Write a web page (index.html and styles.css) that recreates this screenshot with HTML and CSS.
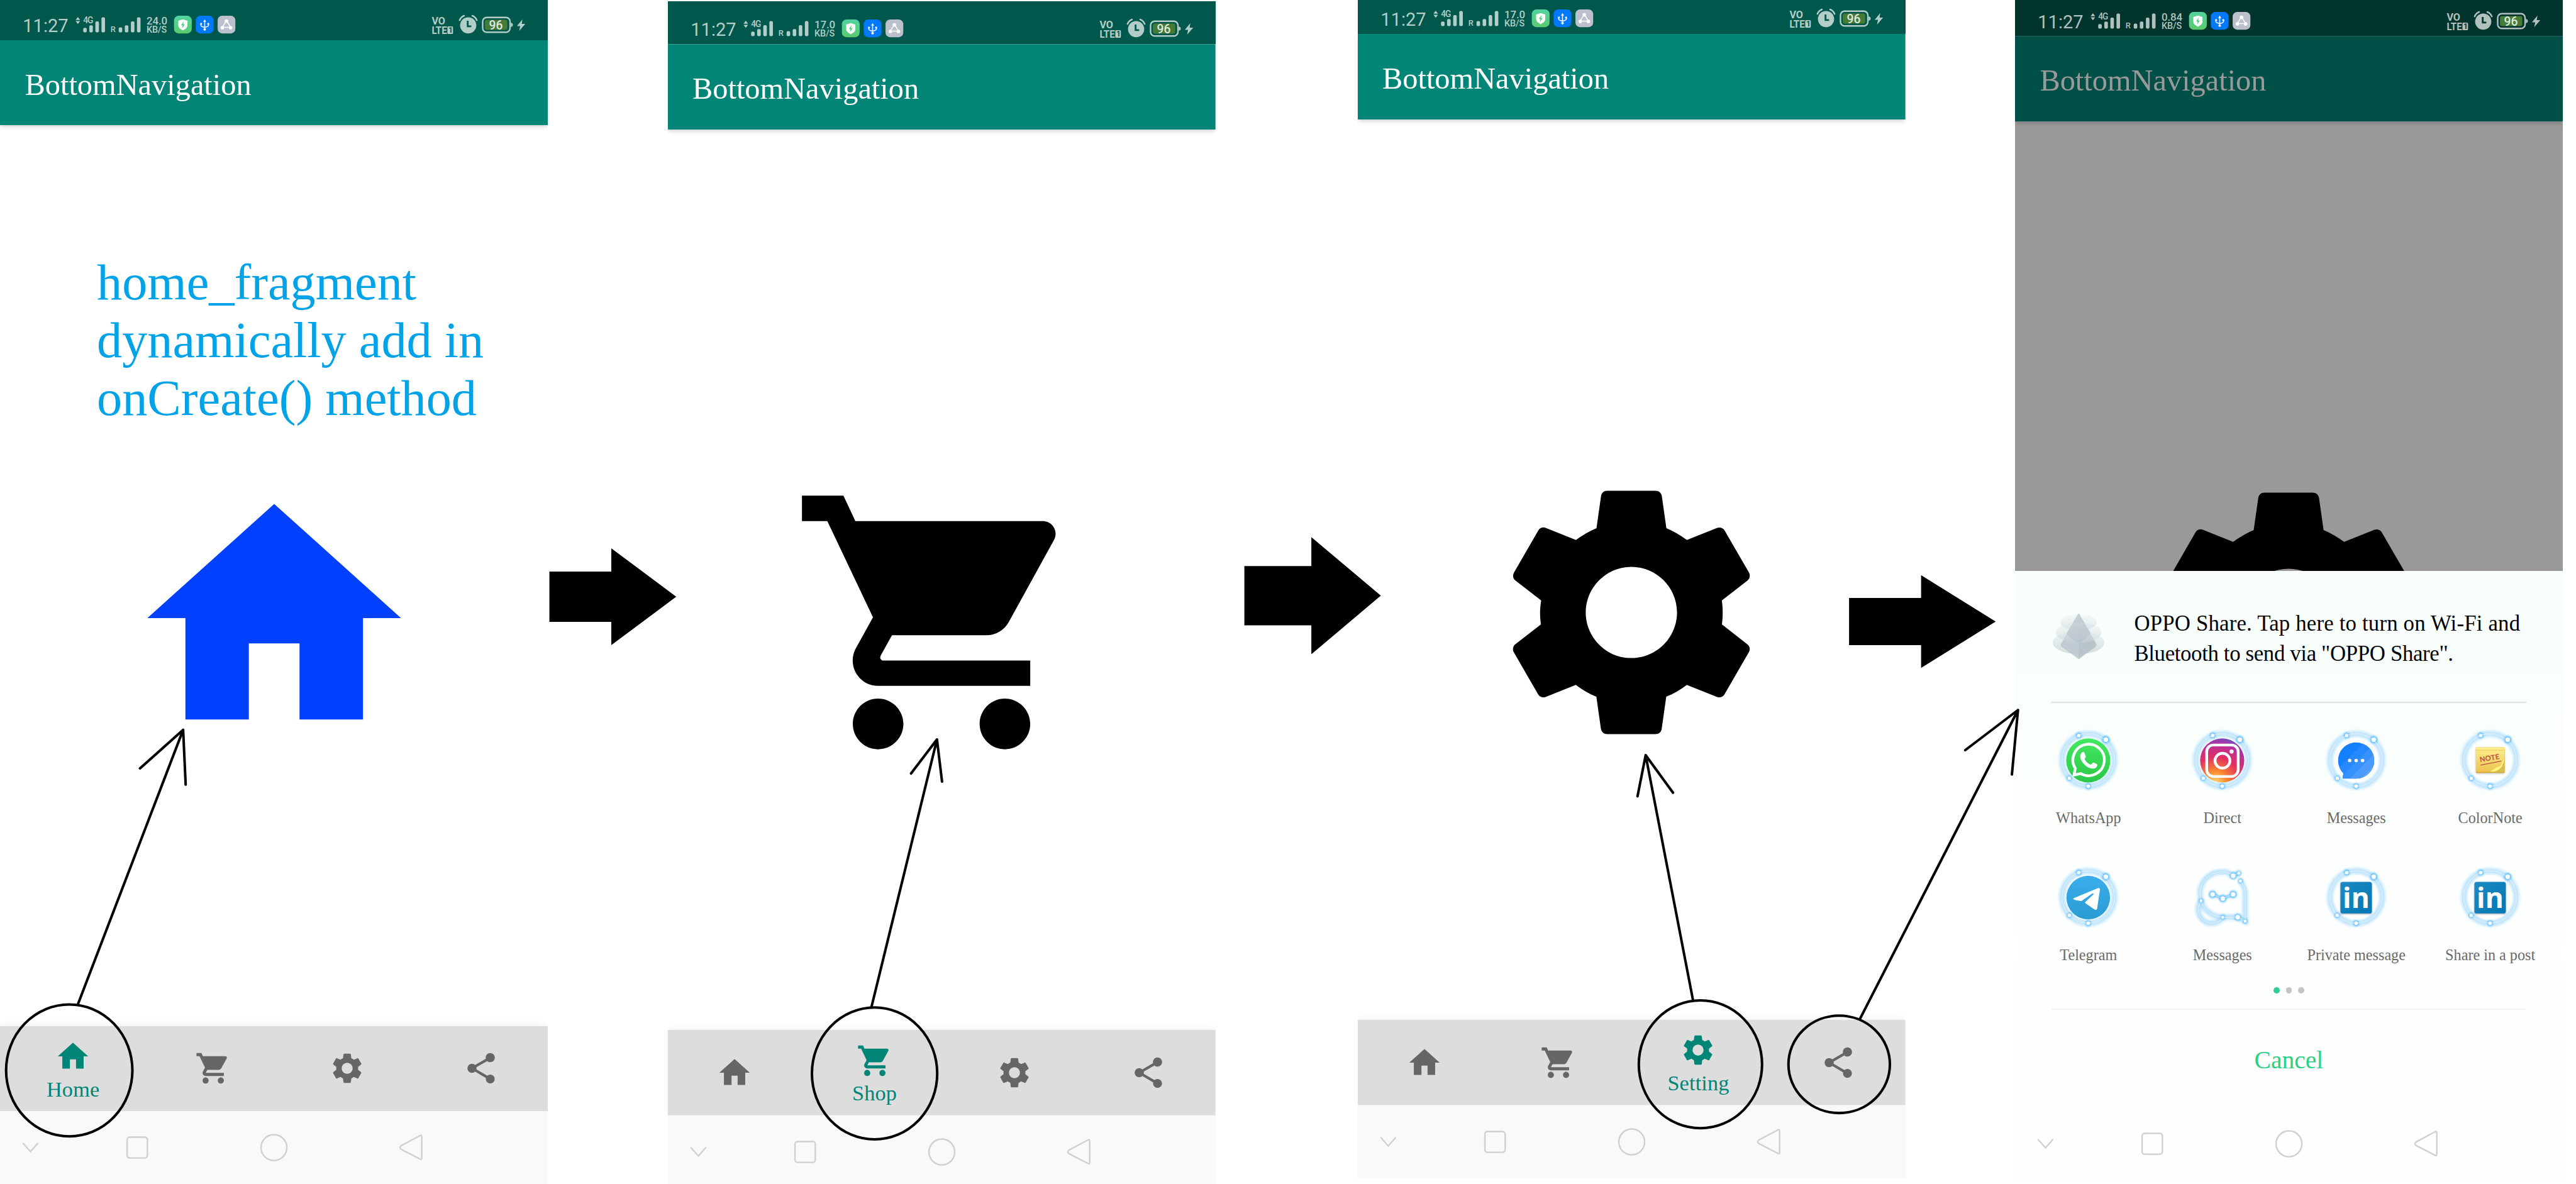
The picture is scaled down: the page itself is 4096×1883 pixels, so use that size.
FILE: index.html
```html
<!DOCTYPE html>
<html lang="en">
<head>
<meta charset="utf-8">
<title>BottomNavigation</title>
<link rel="stylesheet" href="styles.css">
</head>
<body>
<svg class="defs" width="0" height="0" aria-hidden="true">
  <defs>
    <filter id="soft" x="-30%" y="-30%" width="160%" height="160%"><feGaussianBlur stdDeviation="2.4"/></filter>
    <filter id="glow" x="-100%" y="-100%" width="300%" height="300%"><feGaussianBlur stdDeviation="2"/></filter>
    <linearGradient id="shield" x1="0" y1="0" x2="0" y2="1"><stop offset="0" stop-color="#52d3a0"/><stop offset="1" stop-color="#5acb6c"/></linearGradient>
    <linearGradient id="wa" x1="0" y1="0" x2="0" y2="1"><stop offset="0" stop-color="#43e960"/><stop offset="1" stop-color="#2ac848"/></linearGradient>
    <radialGradient id="ig" cx=".35" cy="1" r="1.05"><stop offset="0" stop-color="#fed576"/><stop offset=".26" stop-color="#f9852f"/><stop offset=".55" stop-color="#e22f63"/><stop offset=".82" stop-color="#b9309c"/><stop offset="1" stop-color="#6a4fc6"/></radialGradient>
    <linearGradient id="tg" x1="0" y1="0" x2="0" y2="1"><stop offset="0" stop-color="#3aaeec"/><stop offset="1" stop-color="#2a9ad2"/></linearGradient>
    <linearGradient id="li" x1="0" y1="0" x2="1" y2="1"><stop offset="0" stop-color="#1f8ac2"/><stop offset="1" stop-color="#0077b5"/></linearGradient>
    <linearGradient id="note" x1="0" y1="0" x2="0" y2="1"><stop offset="0" stop-color="#fbf08c"/><stop offset="1" stop-color="#edc352"/></linearGradient>
    <linearGradient id="opal" x1="0" y1="0" x2="0" y2="1"><stop offset="0" stop-color="#eef3f5"/><stop offset="1" stop-color="#c9d2d8"/></linearGradient>
    <clipPath id="bubble"><path d="M0-35.6A35.6 35.6 0 0 1 0 35.6H-25Q-27 35.6-26.6 33L-25 25.4A35.6 35.6 0 0 1 0-35.6Z"/></clipPath>

    <symbol id="home" viewBox="0 0 24 24"><path d="M10 20v-6h4v6h5v-8h3L12 3 2 12h3v8z"/></symbol>
    <symbol id="cart" viewBox="0 0 24 24"><path d="M7 18c-1.1 0-1.99.9-1.99 2S5.9 22 7 22s2-.9 2-2-.9-2-2-2zM1 2v2h2l3.6 7.59-1.35 2.45c-.16.28-.25.61-.25.96 0 1.1.9 2 2 2h12v-2H7.42c-.14 0-.25-.11-.25-.25l.03-.12.9-1.63h7.45c.75 0 1.41-.41 1.75-1.03l3.58-6.49c.08-.14.12-.31.12-.48 0-.55-.45-1-1-1H5.21l-.94-2H1zm16 16c-1.1 0-1.99.9-1.99 2s.89 2 1.99 2 2-.9 2-2-.9-2-2-2z"/></symbol>
    <symbol id="gear" viewBox="0 0 24 24"><path d="M19.14 12.94c.04-.3.06-.61.06-.94 0-.32-.02-.64-.07-.94l2.03-1.58c.18-.14.23-.41.12-.61l-1.92-3.32c-.12-.22-.37-.29-.59-.22l-2.39.96c-.5-.38-1.03-.7-1.62-.94L14.4 2.81c-.04-.24-.24-.41-.48-.41h-3.84c-.24 0-.43.17-.47.41L9.25 5.35C8.66 5.59 8.12 5.92 7.63 6.29L5.24 5.33c-.22-.08-.47 0-.59.22L2.74 8.87c-.12.21-.08.47.12.61l2.03 1.58C4.84 11.36 4.8 11.69 4.8 12s.02.64.07.94l-2.03 1.58c-.18.14-.23.41-.12.61l1.92 3.32c.12.22.37.29.59.22l2.39-.96c.5.38 1.03.7 1.62.94l.36 2.54c.05.24.24.41.48.41h3.84c.24 0 .44-.17.47-.41l.36-2.54c.59-.24 1.13-.56 1.62-.94l2.39.96c.22.08.47 0 .59-.22l1.92-3.32c.12-.22.07-.47-.12-.61L19.14 12.94zM12 15.6c-1.98 0-3.6-1.62-3.6-3.6s1.62-3.6 3.6-3.6 3.6 1.62 3.6 3.6-1.62 3.6-3.6 3.6z"/></symbol>
    <symbol id="share" viewBox="0 0 24 24"><path d="M18 16.08c-.76 0-1.44.3-1.96.77L8.91 12.7c.05-.23.09-.46.09-.7s-.04-.47-.09-.7l7.05-4.11c.54.5 1.25.81 2.04.81 1.66 0 3-1.34 3-3s-1.34-3-3-3-3 1.34-3 3c0 .24.04.47.09.7L8.04 9.81C7.5 9.31 6.79 9 6 9c-1.66 0-3 1.34-3 3s1.34 3 3 3c.79 0 1.5-.31 2.04-.81l7.12 4.16c-.05.21-.08.43-.08.65 0 1.61 1.31 2.92 2.92 2.92s2.92-1.31 2.92-2.92-1.31-2.92-2.92-2.92z"/></symbol>

    <symbol id="sys" viewBox="0 0 1080 144">
      <g fill="none" stroke="#d0d0d0" stroke-width="3">
        <path d="M45 63l15 17 15-17"/>
        <rect x="250.500" y="51.500" width="40" height="41" rx="5"/>
        <circle cx="540" cy="72" r="25.500"/>
        <path d="M827 49Q831.500 45.500 831.500 51V92Q831.500 97.500 827 94L791 75.500Q786 72 791 68Z" stroke-linejoin="round"/>
      </g>
    </symbol>

    <!-- status bar graphics; the text goes on top of them in each phone -->
    <symbol id="status" viewBox="0 0 1080 79">
      <g fill="currentColor">
        <g class="traffic"><path d="M149 39.500l4.500-6 4.500 6z"/><path d="M149 41.500l4.500 6 4.500-6z"/></g>
        <rect x="164" y="55" width="7" height="9" rx="2.500"/><rect x="176" y="50" width="7" height="14" rx="2.500"/><rect x="188" y="42" width="7" height="22" rx="2.500"/><rect x="200" y="34" width="7" height="30" rx="2.500"/>
        <rect x="234" y="54" width="7" height="10" rx="2.500"/><rect x="246" y="50" width="7" height="14" rx="2.500"/><rect x="258" y="42" width="7" height="22" rx="2.500"/><rect x="270" y="34" width="7" height="30" rx="2.500"/>
        <rect x="882" y="52" width="11" height="15" rx="2"/>
        <circle cx="923" cy="50" r="16"/>
        <path d="M906 40q3-7 9-9M940 40q-3-7-9-9" fill="none" stroke="currentColor" stroke-width="3" stroke-linecap="round"/>
        <path d="M1007 45q4 0 4 4t-4 4z"/>
        <path d="M1030 38l-11 13.500h6.500L1023.500 61l12-14h-7z"/>
      </g>
      <path class="cut" d="M922 41v11h7" fill="none" stroke-width="3.500"/>
      <rect x="951.500" y="34.500" width="54" height="29" rx="8" fill="none" stroke="currentColor" stroke-width="3"/>
      <rect x="956" y="39" width="44" height="20" rx="4" fill="#467a37"/>
      <rect x="343" y="31" width="35" height="35" rx="9" fill="url(#shield)"/>
      <path d="M360.500 38l9 3v9q0 6-9 10-9-4-9-10v-9z" fill="#fff"/><path d="M362 42l-5 8h3l-1 6 5-8h-3z" fill="#45cf78"/>
      <rect x="386" y="31" width="35" height="35" rx="9" fill="#0079ff"/>
      <g fill="#fff" stroke="#fff"><path d="M403.500 41v16M396 47v3q0 2.500 7.500 4 7.500-1.500 7.500-4v-3" fill="none" stroke-width="2"/><path stroke="none" d="M400.500 43l3-5 3 5z"/><circle stroke="none" cx="403.500" cy="58" r="2.500"/><circle stroke="none" cx="396.500" cy="47" r="2"/><circle stroke="none" cx="410.500" cy="47" r="2"/></g>
      <rect x="429" y="31" width="35" height="35" rx="9" fill="#bbc0cc"/>
      <g fill="#fff" stroke="#fff" stroke-width="1.800"><path d="M445 43l-6 10M448 43l6 10M442 54h9" fill="none"/><circle cx="446.500" cy="41.500" r="2.600"/><circle cx="438.500" cy="54.500" r="2.600"/><circle cx="454.500" cy="54.500" r="2.600"/></g>
    </symbol>

    <symbol id="halo" viewBox="-65 -65 130 130">
      <circle cy="-1" r="51.700" fill="none" stroke="#bfe4fd" stroke-width="11.500" filter="url(#soft)"/>
      <g fill="#62bfff" filter="url(#glow)"><circle cx="-18.700" cy="-49.300" r="6"/><circle cx="34.700" cy="-41" r="7.500"/><circle cx="-37.300" cy="35" r="5.500"/><circle cy="50.700" r="6"/></g>
      <circle cy="-1" r="51.700" fill="none" stroke="#fff" stroke-opacity=".75"/>
      <g fill="#fff"><circle cx="-18.700" cy="-49.300" r="3.400"/><circle cx="34.700" cy="-41" r="4.500"/><circle cx="-37.300" cy="35" r="3.300"/><circle cy="50.700" r="3.500"/></g>
    </symbol>
  </defs>
</svg>

<main class="board">
  <section class="phone phone-home">
    <div class="status">
      <svg viewBox="0 0 1080 79"><use href="#status"/><g class="st"><text class="clock" x="45" y="63" font-size="36">11:27</text><text x="164" y="46" font-size="17" textLength="20">4G</text><text x="218" y="63.500" font-size="16">R</text><text x="289" y="48" font-size="21" textLength="41">24.0</text><text x="289" y="64" font-size="18" textLength="40">KB/S</text><text x="851" y="48" font-size="20" font-weight="700">VO</text><text x="851" y="67" font-size="20" font-weight="700" textLength="30" lengthAdjust="spacingAndGlyphs">LTE</text><text class="sim" x="884" y="65" font-size="15" font-weight="700" textLength="7">1</text><text class="pct" x="964" y="58" font-size="24">96</text></g></svg>
    </div>
    <header class="appbar">BottomNavigation</header>
    <div class="content"><svg class="hero hero-home"><use href="#home"/></svg></div>
    <nav class="tabs">
      <a class="tab active"><svg><use href="#home"/></svg><span>Home</span></a>
      <a class="tab"><svg><use href="#cart"/></svg></a>
      <a class="tab"><svg><use href="#gear"/></svg></a>
      <a class="tab"><svg><use href="#share"/></svg></a>
    </nav>
    <div class="sysbar"><svg><use href="#sys"/></svg></div>
    <p class="remark">home_fragment<br>dynamically add in<br>onCreate() method</p>
  </section>

  <section class="phone phone-shop">
    <div class="status">
      <svg viewBox="0 0 1080 79"><use href="#status"/><g class="st"><text class="clock" x="45" y="63" font-size="36">11:27</text><text x="164" y="46" font-size="17" textLength="20">4G</text><text x="218" y="63.500" font-size="16">R</text><text x="289" y="48" font-size="21" textLength="41">17.0</text><text x="289" y="64" font-size="18" textLength="40">KB/S</text><text x="851" y="48" font-size="20" font-weight="700">VO</text><text x="851" y="67" font-size="20" font-weight="700" textLength="30" lengthAdjust="spacingAndGlyphs">LTE</text><text class="sim" x="884" y="65" font-size="15" font-weight="700" textLength="7">1</text><text class="pct" x="964" y="58" font-size="24">96</text></g></svg>
    </div>
    <header class="appbar">BottomNavigation</header>
    <div class="content"><svg class="hero"><use href="#cart"/></svg></div>
    <nav class="tabs">
      <a class="tab"><svg><use href="#home"/></svg></a>
      <a class="tab active"><svg><use href="#cart"/></svg><span>Shop</span></a>
      <a class="tab"><svg><use href="#gear"/></svg></a>
      <a class="tab"><svg><use href="#share"/></svg></a>
    </nav>
    <div class="sysbar"><svg><use href="#sys"/></svg></div>
  </section>

  <section class="phone phone-setting">
    <div class="status">
      <svg viewBox="0 0 1080 79"><use href="#status"/><g class="st"><text class="clock" x="45" y="63" font-size="36">11:27</text><text x="164" y="46" font-size="17" textLength="20">4G</text><text x="218" y="63.500" font-size="16">R</text><text x="289" y="48" font-size="21" textLength="41">17.0</text><text x="289" y="64" font-size="18" textLength="40">KB/S</text><text x="851" y="48" font-size="20" font-weight="700">VO</text><text x="851" y="67" font-size="20" font-weight="700" textLength="30" lengthAdjust="spacingAndGlyphs">LTE</text><text class="sim" x="884" y="65" font-size="15" font-weight="700" textLength="7">1</text><text class="pct" x="964" y="58" font-size="24">96</text></g></svg>
    </div>
    <header class="appbar">BottomNavigation</header>
    <div class="content"><svg class="hero"><use href="#gear"/></svg></div>
    <nav class="tabs">
      <a class="tab"><svg><use href="#home"/></svg></a>
      <a class="tab"><svg><use href="#cart"/></svg></a>
      <a class="tab active"><svg><use href="#gear"/></svg><span>Setting</span></a>
      <a class="tab"><svg><use href="#share"/></svg></a>
    </nav>
    <div class="sysbar"><svg><use href="#sys"/></svg></div>
  </section>

  <section class="phone phone-share">
    <div class="status">
      <svg viewBox="0 0 1080 79"><use href="#status"/><g class="st"><text class="clock" x="45" y="63" font-size="36">11:27</text><text x="164" y="46" font-size="17" textLength="20">4G</text><text x="218" y="63.500" font-size="16">R</text><text x="289" y="48" font-size="21" textLength="41">0.84</text><text x="289" y="64" font-size="18" textLength="40">KB/S</text><text x="851" y="48" font-size="20" font-weight="700">VO</text><text x="851" y="67" font-size="20" font-weight="700" textLength="30" lengthAdjust="spacingAndGlyphs">LTE</text><text class="sim" x="884" y="65" font-size="15" font-weight="700" textLength="7">1</text><text class="pct" x="964" y="58" font-size="24">96</text></g></svg>
    </div>
    <header class="appbar">BottomNavigation</header>
    <div class="content"><svg class="hero"><use href="#gear"/></svg></div>
    <div class="sheet">
      <div class="oppo">
        <svg class="oppo-icon" viewBox="0 0 102 90">
          <ellipse cx="51" cy="57" rx="51" ry="23" fill="url(#opal)" opacity=".75"/>
          <path d="M51 0q2 0 4 5L86 60q1 3-2 6Q63 80 51 90 39 80 18 66q-3-3-2-6L47 5q2-5 4-5z" fill="#bcc6ce" opacity=".85"/>
          <path d="M51 0q2 0 4 5L86 60q1 3-2 6Q63 80 51 90z" fill="#a9b5be" opacity=".3"/>
          <ellipse cx="51" cy="37" rx="45" ry="20" fill="url(#opal)" opacity=".55"/>
          <ellipse cx="51" cy="17" rx="36" ry="16" fill="url(#opal)" opacity=".5"/>
          <path d="M51 0L75 38q-12 16-24 19-12-3-24-19z" fill="#aeb9c2" opacity=".4"/>
        </svg>
        <p><span class="line-a">OPPO Share. Tap here to turn on Wi-Fi and</span><br><span class="line-b">Bluetooth to send via "OPPO Share".</span></p>
      </div>
      <div class="rule"></div>
      <div class="apps">
        <div class="app"><svg viewBox="-65 -65 130 130"><use href="#halo" x="-65" y="-65" width="130" height="130"/>
          <circle r="43.500" fill="url(#wa)"/>
          <path d="M-25.500 15.500A31 31 0 1 1-14.500 26L-28 28.500Z" fill="none" stroke="#fff" stroke-width="5.400" stroke-linejoin="miter"/>
          <path d="M-14-14C-17-9-16-3-11 4-5 12 3 16 9 16c5 0 9-3 9-8q0-1-8-4C8 4 7 8 5 8 0 7-6 1-7-3c0-2 3-3 2-6L-8-16c-2-2-5 0-6 2z" fill="#fff"/></svg><span>WhatsApp</span></div>
        <div class="app"><svg viewBox="-65 -65 130 130"><use href="#halo" x="-65" y="-65" width="130" height="130"/>
          <circle r="43.500" fill="url(#ig)"/>
          <g fill="none" stroke="#fff" stroke-width="5.400"><rect x="-30.500" y="-30.500" width="62" height="62" rx="13"/><circle cx=".5" cy=".5" r="14.700"/></g><circle cx="18.500" cy="-17.500" r="4" fill="#fff"/></svg><span>Direct</span></div>
        <div class="app"><svg viewBox="-65 -65 130 130"><use href="#halo" x="-65" y="-65" width="130" height="130"/>
          <circle r="43.500" fill="#fff"/>
          <g clip-path="url(#bubble)"><rect x="-40" y="-40" width="80" height="80" fill="#1480ff"/><path d="M-40 20L20-40H80V60H-40z" fill="#2689ff"/><path d="M-40 43L43-40H80V60H-40z" fill="#3791ff"/><path d="M-22 45L45-22V60H-22z" fill="#4b9bff"/><path d="M0 45L45 0V60H0z" fill="#5fa6ff"/></g>
          <g fill="#fff"><circle cx="-12.700" r="3.400"/><circle r="3.400"/><circle cx="12.700" r="3.400"/></g></svg><span>Messages</span></div>
        <div class="app"><svg viewBox="-65 -65 130 130"><use href="#halo" x="-65" y="-65" width="130" height="130"/>
          <circle r="43" fill="#fdfffe"/>
          <rect x="-28" y="-24" width="56.500" height="50" rx="2" fill="#000" opacity=".25" filter="url(#glow)"/>
          <rect x="-28" y="-26" width="56.500" height="50.500" rx="1.500" fill="#d6a730"/><rect x="-28" y="-26" width="56.500" height="48.500" rx="1.500" fill="url(#note)"/><rect x="-28" y="-21" width="56.500" height="1.800" fill="#efd468"/>
          <path d="M28.500-6v29H0Q24 21 28.500-6z" fill="#d9bd48"/><path d="M28.500-4Q22 8 20 11 14 12 0 22 24 24 28.500-4z" fill="#fff37c"/>
          <g transform="rotate(-9)"><text class="note" x="-20" y="0" font-size="14" textLength="39">NOTE</text></g><path d="M-19 9.300L22 1.300" stroke="#b9503f" stroke-width="1.600"/></svg><span>ColorNote</span></div>
        <div class="app"><svg viewBox="-65 -65 130 130"><use href="#halo" x="-65" y="-65" width="130" height="130"/>
          <circle r="43" fill="url(#tg)"/>
          <path d="M-28 1L19-18.500Q23.500-20 23-15.500L17.500 22Q16.500 25.500 12.500 23.500L-5 11.500Q-7 10-5.500 8.500L10.500-6.500Q10-9 8-8L-13 6.500Q-15 8-28 4Q-31 2.500-28 1Z" fill="#fff"/></svg><span>Telegram</span></div>
        <div class="app"><svg viewBox="-65 -65 130 130">
          <g fill="none" stroke="#b5e0fd" stroke-width="10" filter="url(#soft)"><path d="M-41.700 6.300C-50-22-32-50.700.7-50.700c8 0 15 3 21 7.700l11-5M36-32.700c6 8 9.300 16 9.300 26.400v53l-14.600-8H1.300C-20 38-36 26-41.700 6.300c-14 20 0 44.400 20.700 44.400 10 0 17-4 22.300-12"/></g>
          <g fill="none" stroke="#62bfff" stroke-width="5" filter="url(#glow)"><path d="M-19-6.300L1.300 2l20.400-8.300"/></g>
          <g fill="#62bfff" filter="url(#glow)"><circle cx="-19" cy="-6.300" r="7.500"/><circle cx="1.300" cy="2" r="7.500"/><circle cx="21.700" cy="-6.300" r="7.500"/><circle cx="21.700" cy="-43" r="7"/><circle cx="32.700" cy="-48" r="5"/><circle cx="36" cy="-32.700" r="5"/><circle cx="-41.700" cy="6.300" r="5"/><circle cx="1.300" cy="38.700" r="5"/><circle cx="30.700" cy="38.700" r="7"/><circle cx="45.300" cy="46.700" r="5"/></g>
          <path d="M-41.700 6.300C-50-22-32-50.700.7-50.700c8 0 15 3 21 7.700l11-5M36-32.700c6 8 9.300 16 9.300 26.400v53l-14.600-8H1.300C-20 38-36 26-41.700 6.300c-14 20 0 44.400 20.700 44.400 10 0 17-4 22.300-12M-19-6.300L1.300 2l20.400-8.300" fill="none" stroke="#fff" stroke-opacity=".8"/>
          <g fill="#fff"><circle cx="-19" cy="-6.300" r="4.500"/><circle cx="1.300" cy="2" r="4.500"/><circle cx="21.700" cy="-6.300" r="4.500"/><circle cx="21.700" cy="-43" r="4.500"/><circle cx="32.700" cy="-48" r="3"/><circle cx="36" cy="-32.700" r="3"/><circle cx="-41.700" cy="6.300" r="2.800"/><circle cx="1.300" cy="38.700" r="2.800"/><circle cx="30.700" cy="38.700" r="4.500"/><circle cx="45.300" cy="46.700" r="3"/></g></svg><span>Messages</span></div>
        <div class="app"><svg viewBox="-65 -65 130 130"><use href="#halo" x="-65" y="-65" width="130" height="130"/>
          <circle r="43.500" fill="#fff"/><rect x="-31" y="-29" width="62" height="62" rx="4" fill="#000" opacity=".3" filter="url(#glow)"/><rect x="-31" y="-31" width="62" height="62.500" rx="4.500" fill="url(#li)"/><text class="in" x="-26.500" y="21" font-size="55" textLength="53">in</text></svg><span>Private message</span></div>
        <div class="app"><svg viewBox="-65 -65 130 130"><use href="#halo" x="-65" y="-65" width="130" height="130"/>
          <circle r="43.500" fill="#fff"/><rect x="-31" y="-29" width="62" height="62" rx="4" fill="#000" opacity=".3" filter="url(#glow)"/><rect x="-31" y="-31" width="62" height="62.500" rx="4.500" fill="url(#li)"/><text class="in" x="-26.500" y="21" font-size="55" textLength="53">in</text></svg><span>Share in a post</span></div>
      </div>
      <div class="dots"><i class="on"></i><i></i><i></i></div>
      <div class="rule rule-light"></div>
      <div class="cancel">Cancel</div>
      <div class="sysbar sysbar-clear"><svg><use href="#sys"/></svg></div>
    </div>
  </section>

  <!-- arrows and circles drawn over the phones -->
  <svg class="marks" viewBox="0 0 5078 2335">
    <g fill="#000">
      <path d="M1083 1127H1205V1081L1333 1176.500 1205 1272V1226H1083Z"/>
      <path d="M2453 1116H2585V1059L2722 1174.500 2585 1290V1233H2453Z"/>
      <path d="M3645 1179H3787V1134L3934 1225.500 3787 1317V1272H3645Z"/>
    </g>
    <g fill="none" stroke="#000" stroke-width="5" stroke-linecap="round" stroke-linejoin="round">
      <ellipse cx="136.500" cy="2110.500" rx="124.500" ry="130"/>
      <ellipse cx="1724" cy="2116.500" rx="123.500" ry="130"/>
      <ellipse cx="3352" cy="2098.500" rx="121.500" ry="126"/>
      <ellipse cx="3625.500" cy="2098.500" rx="100" ry="96"/>
      <path d="M154 1979L361 1439M276 1515L361 1439 366 1547"/>
      <path d="M1718 1985L1847 1458M1796 1525L1847 1458 1857 1541"/>
      <path d="M3337 1970L3244 1489M3228 1570L3244 1489 3298 1563"/>
      <path d="M3667 2008L3978 1400M3874 1479L3978 1400 3966 1527"/>
    </g>
  </svg>
</main>
</body>
</html>
```

FILE: styles.css
```css
* {
  box-sizing: border-box;
}

html,
body {
  margin: 0;
  background: #fff;
  overflow: hidden;
}

body {
  width: 4096px;
  height: 1883px;
  font-family: "Liberation Serif", serif;
}

p {
  margin: 0;
}

svg {
  display: block;
  flex: none;
}

.defs {
  position: absolute;
}

.board {
  position: relative;
  display: grid;
  grid-template-columns: 1316px 1360px 1296px 1080px;
  align-items: start;
  width: 5078px;
  height: 2335px;
  overflow: hidden;
  zoom: 0.80662;
}

.phone {
  --bar: #008577;
  --status: #00574b;
  --ink: #b3cdc9;
  position: relative;
  display: flex;
  flex-direction: column;
  width: 1080px;
  background: #fff;
}

.status {
  display: flex;
  align-items: flex-end;
  height: 79px;
  overflow: hidden;
  background: var(--status);
  color: var(--ink);
}

.status svg {
  width: 1080px;
  height: 79px;
}

.phone-shop { margin-top: 3px; }
.phone-shop .status { height: 84px; }
.phone-setting .status { height: 67px; }
.phone-share .status { height: 71px; }

.st {
  font-family: Roboto, sans-serif;
  font-weight: 500;
  fill: currentColor;
}

.clock { font-weight: 400; }
.sim { fill: var(--status); }
.pct { fill: #dfe9e0; }
.cut { stroke: var(--status); }

.appbar {
  height: 168px;
  padding-left: 49px;
  padding-top: 4px;
  background: var(--bar);
  color: #fff;
  font-size: 60px;
  line-height: 168px;
  box-shadow: 0 2px 10px rgba(0, 0, 0, 0.25);
  clip-path: inset(0 0 -16px 0);
}

.content {
  display: flex;
  justify-content: center;
  align-items: center;
  height: 1776px;
  padding-top: 168px;
}

.hero {
  width: 600px;
  height: 600px;
  fill: #000;
}

.hero-home {
  fill: #0040ff;
}

.tabs {
  display: flex;
  height: 168px;
  background: #ddd;
  box-shadow: 0 -2px 12px rgba(0, 0, 0, 0.06);
  clip-path: inset(-16px 0 0 0);
}

.tab {
  display: flex;
  flex-direction: column;
  align-items: center;
  justify-content: center;
  width: 264px;
}

.tab svg {
  width: 72px;
  height: 72px;
  fill: #666;
}

.tab.active {
  justify-content: flex-start;
  width: 288px;
  padding-top: 24px;
  color: #008577;
  font-size: 42.5px;
  line-height: 50px;
  letter-spacing: 0.2px;
}

.tab.active svg {
  fill: #008577;
}

.tab.active span {
  margin-top: 3px;
}

.sysbar {
  height: 144px;
  background: #f9f9f9;
}

.sysbar svg {
  width: 1080px;
  height: 144px;
}

.remark {
  position: absolute;
  left: 191px;
  top: 500px;
  color: #00a2e8;
  font-size: 99.5px;
  line-height: 114px;
  white-space: nowrap;
}

.phone-share {
  --bar: #005047;
  --status: #00342d;
  --ink: #b0c1be;
  background: #999;
}

.phone-share .appbar {
  color: #999;
}

.sheet {
  position: absolute;
  top: 1126px;
  left: 0;
  display: flex;
  flex-direction: column;
  width: 1080px;
  height: 1201px;
  background: linear-gradient(#f7fefc, #fafffb 24%, #fdfffe 45%, #fefefe 80%);
}

.oppo {
  display: flex;
  align-items: center;
  height: 258px;
  padding-left: 75px;
  color: #000;
  font-size: 43.2px;
  line-height: 60px;
  white-space: nowrap;
}

.oppo p {
  margin: 9px 0 0 58px;
}

.line-a {
  letter-spacing: 0.2px;
}

.line-b {
  letter-spacing: -0.45px;
}

.oppo-icon {
  width: 102px;
  height: 90px;
}

.rule {
  height: 2px;
  margin: 0 72px;
  background: #dce2df;
}

.rule-light {
  background: #f0f3f2;
}

.apps {
  display: grid;
  grid-template-columns: repeat(4, 264px);
  grid-template-rows: 270px 205px;
  padding: 49px 0 0 13px;
}

.app {
  display: flex;
  flex-direction: column;
  align-items: center;
  color: #696b6a;
  font-size: 30px;
  line-height: 40px;
  white-space: nowrap;
}

.app svg {
  width: 130px;
  height: 130px;
  margin-bottom: 28px;
}

.note {
  font-family: Lato, sans-serif;
  font-weight: 700;
  fill: #b9503f;
}

.in {
  font-family: "Open Sans", sans-serif;
  font-weight: 700;
  fill: #fff;
}

.dots {
  display: flex;
  justify-content: center;
  gap: 12px;
  height: 79px;
  padding-top: 37px;
}

.dots i {
  width: 12px;
  height: 12px;
  border-radius: 50%;
  background: #c4c4c4;
}

.dots .on {
  background: #33cc99;
}

.cancel {
  margin-top: 69px;
  color: #2bd084;
  font-size: 49px;
  line-height: 60px;
  text-align: center;
}

.sysbar-clear {
  margin-top: auto;
  background: none;
}

.marks {
  position: absolute;
  inset: 0;
  width: 5078px;
  height: 2335px;
}
```
